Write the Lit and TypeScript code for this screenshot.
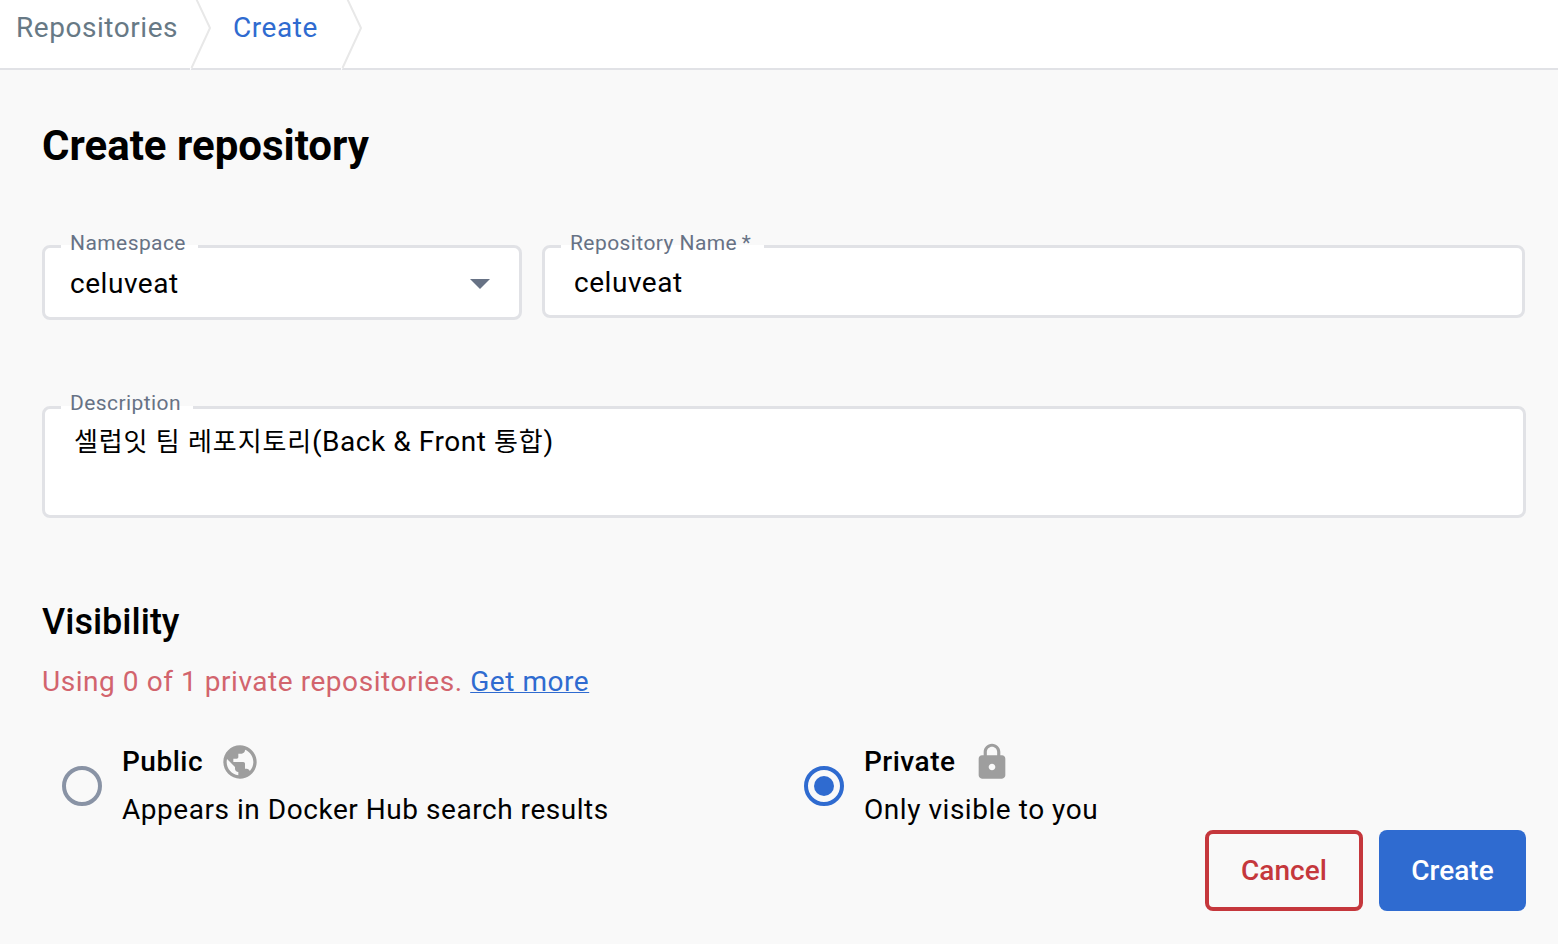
import { LitElement, html, css, svg } from "lit";
import { customElement, property } from "lit/decorators.js";

const base = css`
  * { box-sizing: border-box; }
`;

@customElement("crumb-bar")
class CrumbBar extends LitElement {
  static styles = [base, css`
    :host { display: flex; height: 70px; background: #fff; border-bottom: 2px solid #e1e2e6; padding-left: 16px; }
    .crumb { line-height: 55px; height: 55px; color: #677985; letter-spacing: 0.55px; white-space: nowrap; }
    .first { width: 174px; }
    .current { width: 108px; color: #2f6bd0; margin-left: 22px; }
    svg { display: block; width: 21px; height: 70px; flex: none; }
    .line { fill: none; stroke: #e8e8e8; stroke-width: 2; }
    .gap { fill: #fff; }
  `];
  chevron() {
    return html`<svg viewBox="0 0 21 70">
      <path class="gap" d="M-1 68h2.6l-1 2h-1.6z" />
      <path class="line" d="M6.3 -1L20 28L1.5 68" />
    </svg>`;
  }
  render() {
    return html`
      <span class="crumb first">Repositories</span>${this.chevron()}
      <span class="crumb current">Create</span>${this.chevron()}`;
  }
}

@customElement("outlined-field")
class OutlinedField extends LitElement {
  @property() label = "";
  @property({ type: Boolean }) required = false;
  static styles = [base, css`
    :host { display: block; position: relative; background: #fff; border: 3px solid #e1e2e6; border-radius: 8px; }
    .label {
      position: absolute; left: 16px; top: var(--label-top, -19px); height: 28px; line-height: 28px;
      padding: 0 12px 0 9px; font-size: 21px; letter-spacing: 0.42px; color: #677285; white-space: nowrap;
    }
    .label::before {
      content: ""; position: absolute; z-index: -1; left: 0; right: 0; height: 4px;
      top: calc(-3px - var(--label-top, -19px)); background: #fff;
    }
    .label { z-index: 0; }
    .star { margin: 0 1px 0 4.5px; }
  `];
  render() {
    return html`<span class="label">${this.label}${this.required ? html`<span class="star">*</span>` : ""}</span><slot></slot>`;
  }
}

@customElement("visibility-option")
class VisibilityOption extends LitElement {
  @property() name = "";
  @property() hint = "";
  @property({ type: Boolean }) checked = false;
  static styles = [base, css`
    :host { display: flex; align-items: center; width: 742px; height: 96px; padding-left: 20px; }
    .radio { width: 40px; height: 40px; margin-right: 20px; flex: none; }
    .ring { fill: none; stroke: #8993a5; stroke-width: 4; }
    .on .ring { stroke: #2f6bd0; }
    .dot { fill: #2f6bd0; }
    .head { display: flex; align-items: center; height: 48px; gap: 16.8px; font-weight: 500; letter-spacing: 0.49px; }
    .name { padding-bottom: 2px; }
    .hint { line-height: 48px; letter-spacing: 0.54px; white-space: nowrap; }
    ::slotted(svg) { width: 40px; height: 40px; display: block; fill: #9e9e9e; }
  `];
  render() {
    return html`
      <svg class="radio ${this.checked ? "on" : ""}" viewBox="0 0 40 40">
        <circle class="ring" cx="20" cy="20" r="18" />
        ${this.checked ? svg`<circle class="dot" cx="20" cy="20" r="10" />` : ""}
      </svg>
      <div>
        <div class="head"><span class="name">${this.name}</span><slot></slot></div>
        <div class="hint">${this.hint}</div>
      </div>`;
  }
}

@customElement("app-root")
class AppRoot extends LitElement {
  static styles = [base, css`
    :host {
      display: block; height: 944px; overflow: hidden; background: #f9f9f9; color: #000;
      font-family: Roboto, "Noto Sans CJK KR", sans-serif; font-size: 28px;
    }
    main { padding: 46px 32px 0 42px; }
    h1 { margin: 0; font-size: 42px; line-height: 60px; font-weight: 700; }
    .row { display: flex; align-items: flex-start; gap: 20px; margin-top: 69px; }
    .namespace { width: 480px; height: 75px; }
    .repo { width: 983px; height: 73px; }
    .value { display: flex; align-items: center; justify-content: space-between; height: 70px; padding: 1px 29px 0 25px; letter-spacing: 0.54px; }
    .repo .value { padding: 0 29px; height: 68px; }
    .caret { width: 20px; height: 10px; fill: #677285; }
    .description { height: 112px; margin-top: 86px; --label-top: -20px; }
    .text { padding: 13px 29px; line-height: 40px; letter-spacing: 0.55px; white-space: nowrap; }
    .ko { font-family: "Noto Sans CJK KR", sans-serif; font-size: 26px; line-height: 1; letter-spacing: 0.85px; }
    h2 { margin: 80px 0 0; font-size: 36px; line-height: 48px; font-weight: 500; }
    .quota { margin: 12px 0 0; line-height: 48px; letter-spacing: 0.55px; color: #d2646d; }
    .more { color: #2f6bd0; text-decoration: underline; text-decoration-thickness: 1px; }
    .options { display: flex; margin-top: 32px; }
    .actions { display: flex; justify-content: flex-end; gap: 16px; margin-top: -4px; }
    button { height: 81px; border-radius: 8px; font: 500 28px/1 Roboto, sans-serif; padding: 1px 0 0; letter-spacing: 0.03px; }
    .cancel { width: 158px; border: 4px solid #c5373c; background: transparent; color: #c5373c; }
    .create { width: 147px; border: 0; background: #2f6bd0; color: #fff; }
  `];
  render() {
    return html`
      <crumb-bar></crumb-bar>
      <main>
        <h1>Create repository</h1>
        <div class="row">
          <outlined-field class="namespace" label="Namespace">
            <div class="value"><span>celuveat</span><svg class="caret" viewBox="0 0 20 10"><path d="M0 0h20L10 10z" /></svg></div>
          </outlined-field>
          <outlined-field class="repo" label="Repository Name" required>
            <div class="value">celuveat</div>
          </outlined-field>
        </div>
        <outlined-field class="description" label="Description">
          <div class="text"><span class="ko">셀럽잇</span> <span class="ko">팀</span> <span class="ko">레포지토리</span>(Back &amp; Front <span class="ko">통합</span>)</div>
        </outlined-field>
        <h2>Visibility</h2>
        <p class="quota">Using 0 of 1 private repositories. <a class="more">Get more</a></p>
        <div class="options">
          <visibility-option name="Public" hint="Appears in Docker Hub search results">
            <svg viewBox="0 0 24 24"><path d="M12 2C6.48 2 2 6.48 2 12s4.48 10 10 10 10-4.48 10-10S17.52 2 12 2zm-1 17.93c-3.95-.49-7-3.85-7-7.93 0-.62.08-1.21.21-1.79L9 15v1c0 1.1.9 2 2 2v1.93zm6.9-2.54c-.26-.81-1-1.39-1.9-1.39h-1v-3c0-.55-.45-1-1-1H8v-2h2c.55 0 1-.45 1-1V7h2c1.1 0 2-.9 2-2v-.41c2.93 1.19 5 4.06 5 7.41 0 2.08-.8 3.97-2.1 5.39z" /></svg>
          </visibility-option>
          <visibility-option name="Private" hint="Only visible to you" checked>
            <svg viewBox="0 0 24 24"><path d="M18 8h-1V6c0-2.76-2.24-5-5-5S7 3.24 7 6v2H6c-1.1 0-2 .9-2 2v10c0 1.1.9 2 2 2h12c1.1 0 2-.9 2-2V10c0-1.1-.9-2-2-2zm-6 9c-1.1 0-2-.9-2-2s.9-2 2-2 2 .9 2 2-.9 2-2 2zm3.1-9H8.9V6c0-1.71 1.39-3.1 3.1-3.1 1.71 0 3.1 1.39 3.1 3.1v2z" /></svg>
          </visibility-option>
        </div>
        <div class="actions">
          <button class="cancel">Cancel</button>
          <button class="create">Create</button>
        </div>
      </main>`;
  }
}
